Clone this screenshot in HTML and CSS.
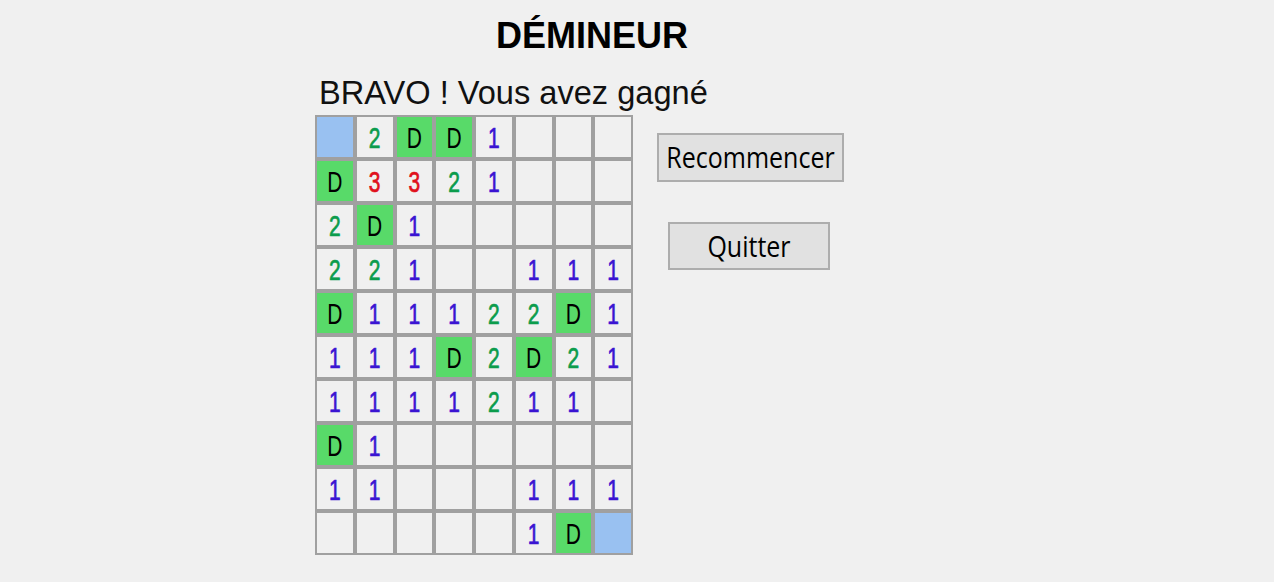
FILE: index.html
```html
<!DOCTYPE html>
<html lang="fr">
<head>
<meta charset="utf-8">
<title>Démineur</title>
<link rel="stylesheet" href="styles.css">
</head>
<body>
<main class="app">
  <h1 class="title">DÉMINEUR</h1>
  <p class="message">BRAVO ! Vous avez gagné</p>
  <div class="board-row">
    <div class="grid">
      <div class="cell sel"></div><div class="cell n2"><span>2</span></div><div class="cell flag"><span>D</span></div><div class="cell flag"><span>D</span></div><div class="cell n1"><span>1</span></div><div class="cell"></div><div class="cell"></div><div class="cell"></div>
      <div class="cell flag"><span>D</span></div><div class="cell n3"><span>3</span></div><div class="cell n3"><span>3</span></div><div class="cell n2"><span>2</span></div><div class="cell n1"><span>1</span></div><div class="cell"></div><div class="cell"></div><div class="cell"></div>
      <div class="cell n2"><span>2</span></div><div class="cell flag"><span>D</span></div><div class="cell n1"><span>1</span></div><div class="cell"></div><div class="cell"></div><div class="cell"></div><div class="cell"></div><div class="cell"></div>
      <div class="cell n2"><span>2</span></div><div class="cell n2"><span>2</span></div><div class="cell n1"><span>1</span></div><div class="cell"></div><div class="cell"></div><div class="cell n1"><span>1</span></div><div class="cell n1"><span>1</span></div><div class="cell n1"><span>1</span></div>
      <div class="cell flag"><span>D</span></div><div class="cell n1"><span>1</span></div><div class="cell n1"><span>1</span></div><div class="cell n1"><span>1</span></div><div class="cell n2"><span>2</span></div><div class="cell n2"><span>2</span></div><div class="cell flag"><span>D</span></div><div class="cell n1"><span>1</span></div>
      <div class="cell n1"><span>1</span></div><div class="cell n1"><span>1</span></div><div class="cell n1"><span>1</span></div><div class="cell flag"><span>D</span></div><div class="cell n2"><span>2</span></div><div class="cell flag"><span>D</span></div><div class="cell n2"><span>2</span></div><div class="cell n1"><span>1</span></div>
      <div class="cell n1"><span>1</span></div><div class="cell n1"><span>1</span></div><div class="cell n1"><span>1</span></div><div class="cell n1"><span>1</span></div><div class="cell n2"><span>2</span></div><div class="cell n1"><span>1</span></div><div class="cell n1"><span>1</span></div><div class="cell"></div>
      <div class="cell flag"><span>D</span></div><div class="cell n1"><span>1</span></div><div class="cell"></div><div class="cell"></div><div class="cell"></div><div class="cell"></div><div class="cell"></div><div class="cell"></div>
      <div class="cell n1"><span>1</span></div><div class="cell n1"><span>1</span></div><div class="cell"></div><div class="cell"></div><div class="cell"></div><div class="cell n1"><span>1</span></div><div class="cell n1"><span>1</span></div><div class="cell n1"><span>1</span></div>
      <div class="cell"></div><div class="cell"></div><div class="cell"></div><div class="cell"></div><div class="cell"></div><div class="cell n1"><span>1</span></div><div class="cell flag"><span>D</span></div><div class="cell sel"></div>
    </div>
    <div class="controls">
      <button class="btn btn-restart"><span>Recommencer</span></button>
      <button class="btn btn-quit"><span>Quitter</span></button>
    </div>
  </div>
</main>
</body>
</html>
```

FILE: styles.css
```css
html, body {
  margin: 0;
  padding: 0;
  background: #f0f0f0;
}

body {
  font-family: "Liberation Sans", Arial, sans-serif;
  color: #000;
}

.app {
  padding: 16px 0 0 315px;
}

.title {
  margin: 0;
  width: 554px;
  text-align: center;
  font-size: 36px;
  line-height: 40px;
  font-weight: bold;
}

.message {
  margin: 19px 0 0 0;
  padding-left: 4px;
  font-size: 32.6px;
  line-height: 36px;
  color: #111;
}

.board-row {
  display: flex;
  align-items: flex-start;
  margin-top: 4px;
}

.grid {
  width: 318px;
  height: 440px;
  box-sizing: border-box;
  display: grid;
  grid-template-columns: repeat(8, 1fr);
  grid-template-rows: repeat(10, 1fr);
  gap: 4px;
  padding: 2px;
  background: #a0a0a0;
}

.cell {
  background: #f0f0f0;
  display: flex;
  align-items: center;
  justify-content: center;
  font-size: 21px;
}

.cell span {
  display: inline-block;
  transform: scaleY(1.38);
  line-height: 1;
}

.cell.flag {
  background: #58da69;
  color: #000;
}

.cell.sel {
  background: #99c1f1;
}

.n1, .n2, .n3 {
  -webkit-text-stroke: 0.5px currentColor;
}

.n1 { color: #3a14d2; }
.n2 { color: #0b9c4c; }
.n3 { color: #e0101c; }

.controls {
  display: flex;
  flex-direction: column;
  align-items: center;
  gap: 40px;
  margin-left: 24px;
  padding-top: 18px;
}

.btn {
  box-sizing: border-box;
  background: #e1e1e1;
  border: 2px solid #adadad;
  border-radius: 0;
  font-family: "Open Sans", "Liberation Sans", sans-serif;
  font-size: 25px;
  color: #000;
  padding: 0;
  display: flex;
  align-items: center;
  justify-content: center;
}

.btn span {
  display: inline-block;
  transform: scaleY(1.15);
  line-height: 1;
}

.btn-restart {
  width: 187px;
  height: 49px;
}

.btn-quit {
  width: 162px;
  height: 48px;
  margin-right: 3px;
}
```
